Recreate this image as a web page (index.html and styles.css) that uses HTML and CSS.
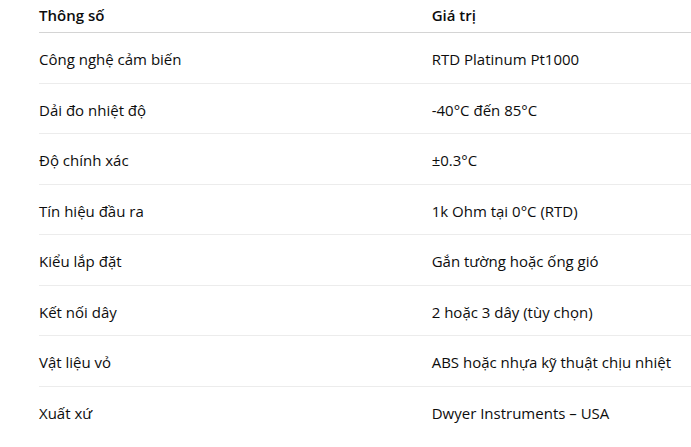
FILE: index.html
```html
<!DOCTYPE html>
<html lang="vi">
<head>
<meta charset="utf-8">
<link rel="stylesheet" href="styles.css">
</head>
<body>
<div class="wrap">
<table class="spec">
<colgroup><col class="col-key"><col class="col-val"></colgroup>
<thead>
<tr><th>Thông số</th><th>Giá trị</th></tr>
</thead>
<tbody>
<tr><td>Công nghệ cảm biến</td><td>RTD Platinum Pt1000</td></tr>
<tr><td>Dải đo nhiệt độ</td><td>-40°C đến 85°C</td></tr>
<tr><td>Độ chính xác</td><td>±0.3°C</td></tr>
<tr><td>Tín hiệu đầu ra</td><td>1k Ohm tại 0°C (RTD)</td></tr>
<tr><td>Kiểu lắp đặt</td><td>Gắn tường hoặc ống gió</td></tr>
<tr><td>Kết nối dây</td><td>2 hoặc 3 dây (tùy chọn)</td></tr>
<tr><td>Vật liệu vỏ</td><td>ABS hoặc nhựa kỹ thuật chịu nhiệt</td></tr>
<tr><td>Xuất xứ</td><td>Dwyer Instruments – USA</td></tr>
</tbody>
</table>
</div>
</body>
</html>
```
FILE: styles.css
```css
html, body {
  margin: 0;
  padding: 0;
  background: #ffffff;
}
body {
  font-family: "Open Sans", "Noto Sans", sans-serif;
  font-size: 15px;
  color: #0d0d0d;
  overflow: hidden;
}
.wrap {
  padding-left: 39px;
}
.spec {
  border-collapse: collapse;
  table-layout: fixed;
  width: 100%;
}
.col-key {
  width: 392.7px;
}
.spec th {
  text-align: left;
  font-weight: 600;
  line-height: 20px;
  padding: 5.2px 0 6.8px 0;
  border-bottom: 1px solid #d4d4d4;
}
.spec td {
  line-height: 20px;
  padding: 16px 0 13.57px 0;
  border-bottom: 1px solid #ececec;
  white-space: nowrap;
}
.spec tbody tr:last-child td {
  border-bottom: none;
}
```
